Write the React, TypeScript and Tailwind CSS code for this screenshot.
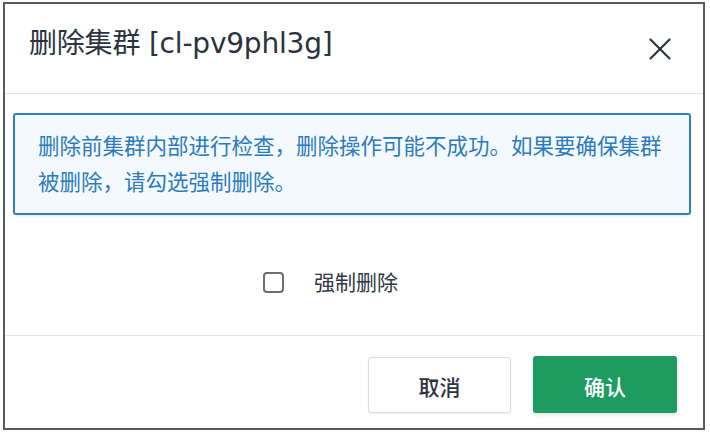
import { X } from "lucide-react";

const cjk = "font-['Liberation_Sans','Noto_Sans_CJK_SC',sans-serif]";

export default function App() {
  return (
    <div className={`h-[434px] w-[710px] bg-white pl-[3px] pt-[2px] ${cjk}`}>
      <div className="flex h-[428px] w-[702px] flex-col border-2 border-[#555a63] bg-white">
        {/* header */}
        <div className="flex h-[90px] shrink-0 items-center justify-between border-b border-[#e2e4e8] pl-[24px] pr-[24px]">
          <h1 className="mb-[10px] font-['DejaVu_Sans','Noto_Sans_CJK_SC',sans-serif] text-[28px] leading-none tracking-[-0.2px] text-[#2b3240]">
            删除集群 [cl-pv9phl3g]
          </h1>
          <button type="button" className="text-[#2b3240]" aria-label="关闭">
            <X size={38} strokeWidth={1.35} />
          </button>
        </div>

        {/* body */}
        <div className="flex flex-1 flex-col">
          <div className="ml-[8px] mr-[12px] mt-[19px] whitespace-nowrap rounded-[3px] border-2 border-[#2f7fc1] bg-[#f4f9fe] px-[23px] pb-[12px] pt-[14px] text-[21.5px] leading-[36px] text-[#2b7bbd] shadow-[0_1px_3px_rgba(0,0,0,0.08)]">
            删除前集群内部进行检查，删除操作可能不成功。如果要确保集群
            <br />
            被删除，请勾选强制删除。
          </div>
          <label className="mt-[57px] flex items-center pl-[258px]">
            <span className="h-[21px] w-[21px] rounded-[4px] border-2 border-[#6b6e74] bg-white" />
            <span className="ml-[30px] text-[21px] leading-none text-[#2f3644]">
              强制删除
            </span>
          </label>
        </div>

        {/* footer */}
        <div className="flex h-[93px] shrink-0 justify-end gap-[22px] border-t border-[#e2e4e8] pr-[26px] pt-[21px]">
          <button
            type="button"
            className="h-[56px] w-[143px] rounded-[3px] border border-[#d9dde3] bg-white pt-[6px] text-[21px] font-medium text-[#2b3240] shadow-[0_1px_2px_rgba(0,0,0,0.06)]"
          >
            取消
          </button>
          <button
            type="button"
            className="-mt-[1px] h-[57px] w-[144px] rounded-[3px] bg-[#1e9b61] pt-[6px] text-[21px] font-medium text-white shadow-[0_2px_4px_rgba(0,0,0,0.12)]"
          >
            确认
          </button>
        </div>
      </div>
    </div>
  );
}
